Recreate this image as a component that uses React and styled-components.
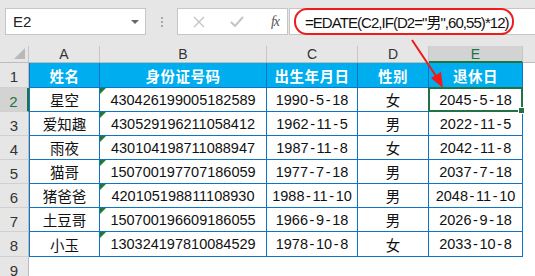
import React from "react";
import styled, { createGlobalStyle } from "styled-components";

const GlobalStyle = createGlobalStyle`
    html, body {
        margin: 0;
        padding: 0;
        background: #ffffff;
    }
    body {
        font-family: "Liberation Sans", "Noto Sans CJK SC", sans-serif;
    }
`;

const Page = styled.div`
    position: relative;
    width: 535px;
    height: 276px;
    overflow: hidden;
    background: #ffffff;
`;

const Toolbar = styled.div`
    height: 46px;
    box-sizing: border-box;
    padding: 8px 0 0 5px;
    background: #e6e6e6;
    display: flex;
    align-items: flex-start;
`;

const NameBox = styled.div`
    width: 141px;
    height: 27px;
    box-sizing: border-box;
    background: #fff;
    border: 1px solid #c6c6c6;
    display: flex;
    align-items: center;
    justify-content: space-between;
    padding: 0 6px 0 7px;
    font-size: 15px;
    color: #222;
`;

const Caret = styled.span`
    width: 0;
    height: 0;
    border-left: 4px solid transparent;
    border-right: 4px solid transparent;
    border-top: 4px solid #666;
`;

const Dots = styled.div`
    width: 31px;
    height: 27px;
    display: flex;
    flex-direction: column;
    align-items: center;
    justify-content: center;
    gap: 2px;

    span {
        width: 2px;
        height: 2px;
        background: #a8a8a8;
    }
`;

const FxButtons = styled.div`
    width: 111px;
    height: 27px;
    box-sizing: border-box;
    background: #fff;
    border: 1px solid #c6c6c6;
    display: flex;
    align-items: center;
    padding-left: 11px;
`;

const FxSlot = styled.div`
    width: ${(p) => p.w}px;
    display: flex;
    align-items: center;
    justify-content: center;
`;

const FxLabel = styled.span`
    font-family: "Liberation Serif", serif;
    font-style: italic;
    font-size: 14px;
    color: #555;
    letter-spacing: -1px;
`;

const FormulaInput = styled.div`
    flex: 1;
    height: 27px;
    box-sizing: border-box;
    background: #fff;
    border: 1px solid #c6c6c6;
    border-right: none;
    margin-left: 1px;
    padding-left: 4px;
    display: flex;
    align-items: center;
`;

const Highlight = styled.div`
    width: 220px;
    height: 27px;
    margin-top: -1px;
    box-sizing: border-box;
    border: 2px solid #ee1c1c;
    border-radius: 13px;
    display: flex;
    align-items: center;
    padding-left: 9px;
    font-size: 15px;
    letter-spacing: -0.95px;
    color: #111;
    white-space: nowrap;
`;

const Sheet = styled.div`
    display: grid;
    grid-template-columns: 29px 71px 167px 91px 71px 94px 1fr;
    grid-template-rows: 17px 25px repeat(6, 24px) 25px 24px;
`;

const Corner = styled.div`
    background: #e6e6e6;
    border-right: 1px solid #c6c6c6;
    border-bottom: 1px solid #bdbdbd;
    position: relative;

    &::after {
        content: "";
        position: absolute;
        right: 3px;
        bottom: 3px;
        border-left: 11px solid transparent;
        border-bottom: 11px solid #b9b9b9;
    }
`;

const ColHead = styled.div`
    background: ${(p) => (p.active ? "#d3d3d3" : "#e6e6e6")};
    color: ${(p) => (p.active ? "#217346" : "#333")};
    border-right: 1px solid #c6c6c6;
    border-bottom: ${(p) => (p.active ? "2px solid #217346" : "1px solid #bdbdbd")};
    font-size: 14px;
    display: flex;
    align-items: center;
    justify-content: center;
    box-sizing: border-box;
`;

const RowHead = styled.div`
    background: ${(p) => (p.active ? "#d3d3d3" : "#e6e6e6")};
    color: ${(p) => (p.active ? "#217346" : "#333")};
    border-right: ${(p) => (p.active ? "2px solid #217346" : "1px solid #bdbdbd")};
    border-bottom: 1px solid #d0d0d0;
    font-size: 15px;
    display: flex;
    align-items: center;
    justify-content: center;
    padding-top: 3px;
    box-sizing: border-box;
`;

const Cell = styled.div`
    position: relative;
    box-sizing: border-box;
    display: flex;
    align-items: center;
    justify-content: center;
    font-size: 14.5px;
    white-space: nowrap;
    border-right: 1px solid #1173c4;
    border-bottom: 1px solid #1173c4;
    border-left: ${(p) => (p.first ? "1px solid #1173c4" : "none")};
    background: ${(p) => (p.head ? "#00aeef" : "#fff")};
    color: ${(p) => (p.head ? "#fff" : "#111")};
    font-weight: ${(p) => (p.head ? 700 : 400)};
    letter-spacing: ${(p) => (p.head ? "0.5px" : "0")};

    ${(p) =>
        p.flag &&
        `
        &::before {
            content: "";
            position: absolute;
            top: 0;
            left: 0;
            border-top: 6px solid #1e7b34;
            border-right: 6px solid transparent;
        }
    `}

    ${(p) =>
        p.selected &&
        `
        &::after {
            content: "";
            position: absolute;
            top: -1px;
            left: -1px;
            right: -1px;
            bottom: -1px;
            border: 2px solid #217346;
        }
    `}
`;

const Handle = styled.span`
    position: absolute;
    right: -3px;
    bottom: -3px;
    width: 5px;
    height: 5px;
    background: #217346;
    border: 1px solid #fff;
    z-index: 2;
`;

const Blank = styled.div`
    background: ${(p) => (p.gray ? "#e6e6e6" : "#fff")};
    border-bottom: ${(p) => (p.gray ? "1px solid #bdbdbd" : "none")};
`;

const Dash = styled.span`
    margin: 0 1.6px;
`;

const Arrow = styled.svg`
    position: absolute;
    left: 0;
    top: 0;
    pointer-events: none;
`;

const columns = ["A", "B", "C", "D", "E"];
const headers = ["姓名", "身份证号码", "出生年月日", "性别", "退休日"];

const rows = [
    ["星空", "430426199005182589", "1990-5-18", "女", "2045-5-18"],
    ["爱知趣", "430529196211058412", "1962-11-5", "男", "2022-11-5"],
    ["雨夜", "430104198711088947", "1987-11-8", "女", "2042-11-8"],
    ["猫哥", "150700197707186059", "1977-7-18", "男", "2037-7-18"],
    ["猪爸爸", "420105198811108930", "1988-11-10", "男", "2048-11-10"],
    ["土豆哥", "150700196609186055", "1966-9-18", "男", "2026-9-18"],
    ["小玉", "130324197810084529", "1978-10-8", "女", "2033-10-8"],
];

const DateText = ({ value }) =>
    value.split("-").map((part, i) => (
        <React.Fragment key={i}>
            {i > 0 && <Dash>-</Dash>}
            {part}
        </React.Fragment>
    ));

const App = () => {
    return (
        <Page>
            <GlobalStyle />
            <Toolbar>
                <NameBox>
                    E2
                    <Caret />
                </NameBox>
                <Dots>
                    <span />
                    <span />
                    <span />
                </Dots>
                <FxButtons>
                    <FxSlot w={20}>
                        <svg width="12" height="12" viewBox="0 0 12 12">
                            <path d="M1 1L11 11M11 1L1 11" stroke="#c4c4c4" strokeWidth="1.4" />
                        </svg>
                    </FxSlot>
                    <FxSlot w={56}>
                        <svg width="14" height="11" viewBox="0 0 14 11">
                            <path d="M1 6L5 10L13 1" stroke="#c4c4c4" strokeWidth="2" fill="none" />
                        </svg>
                    </FxSlot>
                    <FxSlot w={20}>
                        <FxLabel>fx</FxLabel>
                    </FxSlot>
                </FxButtons>
                <FormulaInput>
                    <Highlight>=EDATE(C2,IF(D2="男",60,55)*12)</Highlight>
                </FormulaInput>
            </Toolbar>

            <Sheet>
                <Corner />
                {columns.map((c) => (
                    <ColHead key={c} active={c === "E"}>
                        {c}
                    </ColHead>
                ))}
                <Blank gray />

                <RowHead>1</RowHead>
                {headers.map((h, i) => (
                    <Cell key={h} head first={i === 0}>
                        {h}
                    </Cell>
                ))}
                <Blank />

                {rows.map((row, r) => (
                    <React.Fragment key={row[0]}>
                        <RowHead active={r === 0}>{r + 2}</RowHead>
                        <Cell first>{row[0]}</Cell>
                        <Cell flag>{row[1]}</Cell>
                        <Cell>
                            <DateText value={row[2]} />
                        </Cell>
                        <Cell>{row[3]}</Cell>
                        <Cell selected={r === 0}>
                            <DateText value={row[4]} />
                            {r === 0 && <Handle />}
                        </Cell>
                        <Blank />
                    </React.Fragment>
                ))}

                <RowHead>9</RowHead>
                <Blank />
            </Sheet>

            <Arrow width="535" height="276" viewBox="0 0 535 276">
                <line x1="412" y1="40" x2="438" y2="79" stroke="#f01818" strokeWidth="2" />
                <polygon points="443,88 431,78 441,72" fill="#f01818" />
            </Arrow>
        </Page>
    );
};

export default App;
